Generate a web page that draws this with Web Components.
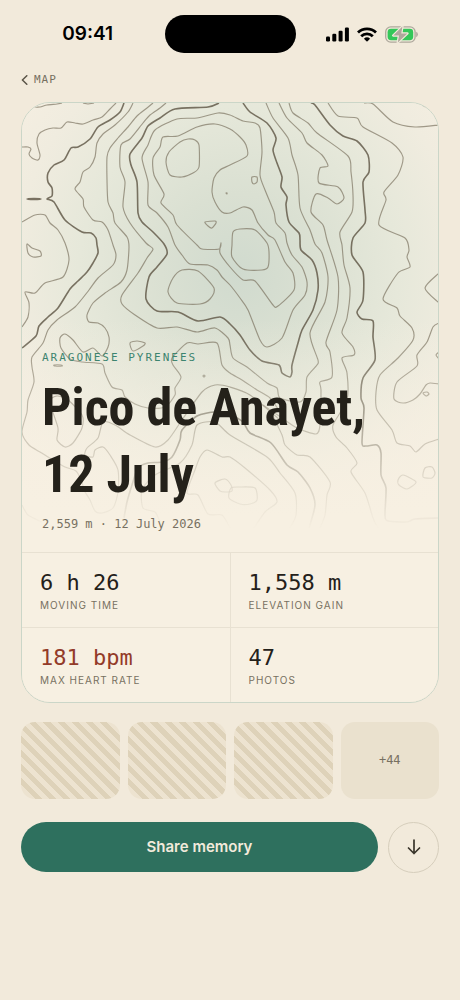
<!DOCTYPE html>
<html lang="en">
<head>
<meta charset="utf-8">
<meta name="viewport" content="width=device-width, initial-scale=1">
<title>Pico de Anayet</title>
<style>
  :root {
    --page: #f2eadb;
    --card: #f7f0e2;
    --ink: #24211a;
    --muted: #777061;
    --line: #e8e1d2;
    --edge: #cbd6c8;
    --accent: #2e705e;
    --alert: #933b29;
    --sand: #eae1ce;
    --gutter: 21px;
    --sans: Inter, "Liberation Sans", sans-serif;
    --mono: "DejaVu Sans Mono", "Liberation Mono", monospace;
    --display: "Roboto Condensed", Roboto, "Liberation Sans", sans-serif;
  }

  body {
    margin: 0;
    min-height: 100vh;
    background: var(--page);
    color: var(--ink);
    font-family: var(--sans);
  }
</style>
</head>
<body>
<memory-screen>
  <status-bar slot="status" time="09:41"></status-bar>
  <back-link slot="nav" href="#map">MAP</back-link>
  <memory-card>
    <memory-hero slot="hero">
      <span slot="region">ARAGONESE PYRENEES</span>
      <span slot="title">Pico de Anayet, 12 July</span>
      <span slot="meta">2,559 m · 12 July 2026</span>
    </memory-hero>
    <stat-cell value="6 h 26" label="MOVING TIME"></stat-cell>
    <stat-cell value="1,558 m" label="ELEVATION GAIN"></stat-cell>
    <stat-cell value="181 bpm" label="MAX HEART RATE" tone="alert"></stat-cell>
    <stat-cell value="47" label="PHOTOS"></stat-cell>
  </memory-card>
  <photo-strip more="+44"></photo-strip>
  <memory-actions>Share memory</memory-actions>
</memory-screen>

<script>
// Small base: clones the class template into an open shadow root.
class BaseElement extends HTMLElement {
  constructor() {
    super();
    const template = document.createElement("template");
    template.innerHTML = this.constructor.markup;
    this.attachShadow({ mode: "open" });
    this.shadowRoot.appendChild(template.content.cloneNode(true));
  }

  $(selector) {
    return this.shadowRoot.querySelector(selector);
  }
}

class MemoryScreen extends BaseElement {
  static markup = `
    <style>
      :host { display: block; }
      main {
        display: flex;
        flex-direction: column;
        padding: 0 var(--gutter) var(--gutter);
      }
      nav { display: flex; margin-bottom: 10px; }
    </style>
    <slot name="status"></slot>
    <main>
      <nav><slot name="nav"></slot></nav>
      <slot></slot>
    </main>
  `;
}

class StatusBar extends BaseElement {
  static markup = `
    <style>
      :host { display: block; color: #000; }
      header {
        display: grid;
        grid-template-columns: 1fr 131px 1fr;
        align-items: center;
        justify-items: center;
        height: 68px;
        padding: 0 11px;
      }
      time { font-size: 19px; font-weight: 600; line-height: 24px; }
      .island { width: 131px; height: 38px; border-radius: 19px; background: #000; }
      .icons { display: flex; align-items: center; gap: 8px; }
      svg { display: block; }
    </style>
    <header>
      <time></time>
      <div class="island"></div>
      <div class="icons">
        <svg width="23" height="15" viewBox="0 0 23 15" aria-hidden="true">
          <rect x="0" y="9.5" width="4" height="5" rx="1.2"/>
          <rect x="6.3" y="6.8" width="4" height="7.7" rx="1.2"/>
          <rect x="12.6" y="3.8" width="4" height="10.7" rx="1.2"/>
          <rect x="18.9" y="0.5" width="4" height="14" rx="1.2"/>
        </svg>
        <svg width="20" height="15" viewBox="0 0 20 15" aria-hidden="true">
          <g fill="none" stroke="#000" stroke-width="2.8">
            <path d="M1 5.4 A13 13 0 0 1 19 5.4"/>
            <path d="M4.2 9.2 A8.2 8.2 0 0 1 15.8 9.2"/>
          </g>
          <path d="M6.9 11.7 A4.6 4.6 0 0 1 13.1 11.7 L10.5 14.3 Q10 14.8 9.5 14.3 Z"/>
        </svg>
        <svg width="33" height="17" viewBox="0 0 33 17" aria-hidden="true">
          <rect x="0.7" y="0.9" width="29.4" height="15.2" rx="5" fill="none" stroke="#aea89c" stroke-width="1.3"/>
          <path d="M31.2 5.8 Q32.9 6.6 32.9 8.5 T31.2 11.2 Z" fill="#aea89c"/>
          <rect x="2.6" y="2.8" width="25.6" height="11.4" rx="3.4" fill="#34c759"/>
          <path d="M17.4 0.6 L8.2 9.5 H14 L12.8 16.4 L22.4 7.4 H16.3 Z" fill="#aea89c" stroke="#f2eadb" stroke-width="2.4" stroke-linejoin="round" paint-order="stroke"/>
        </svg>
      </div>
    </header>
  `;

  connectedCallback() {
    this.$("time").textContent = this.getAttribute("time") ?? "";
  }
}

class BackLink extends BaseElement {
  static markup = `
    <style>
      :host { display: block; }
      a {
        display: flex;
        align-items: center;
        gap: 6px;
        height: 24px;
        color: var(--muted);
        font: 11px/16px var(--mono);
        letter-spacing: 1px;
        text-decoration: none;
      }
    </style>
    <a>
      <svg width="7" height="10" viewBox="0 0 7 10" aria-hidden="true">
        <path d="M5.8 0.7 L1.4 5 L5.8 9.3" fill="none" stroke="#5b5548" stroke-width="1.5" stroke-linecap="round" stroke-linejoin="round"/>
      </svg>
      <slot></slot>
    </a>
  `;

  connectedCallback() {
    this.$("a").href = this.getAttribute("href") ?? "#";
  }
}

class MemoryCard extends BaseElement {
  static markup = `
    <style>
      :host { display: block; }
      article {
        overflow: hidden;
        border: 1px solid var(--edge);
        border-radius: 29px;
        background: var(--card);
      }
      .stats {
        display: grid;
        grid-template-columns: 1fr 1fr;
        gap: 1px;
        padding-top: 1px;
        background: var(--line);
      }
    </style>
    <article>
      <slot name="hero"></slot>
      <div class="stats"><slot></slot></div>
    </article>
  `;
}

// Elevation contours, "x,y x,y ..." in map units.
// Index lines are the heavier ones.
const CONTOURS = [
  { d: "33,107 40,107 47,105 57,104 62,103" },
  { d: "83,103 88,104 94,103" },
  { d: "116,103 110,109 102,117 93,120 83,124 75,123 67,122 61,128 53,128 45,130 39,134 37,143 40,155 38,160 32,158 29,154 31,149 28,147 22,147" },
  { d: "124,103 120,112 110,120 98,127 90,139 78,147 71,148 64,160 54,165 48,173 48,182 52,188 52,196 47,199 54,202 65,220 82,232 91,233 96,238 97,245 98,253 93,263 87,272 78,281 70,289 58,308 48,317 39,326 36,336 22,348", index: true },
  { d: "27,199 34,198.5 41,199 34,199.5", closed: true, index: true },
  { d: "133,103 128,112 115,125 103,134 97,143 95,157 90,167 83,172 80,182 75,189 83,199 84,207 93,220 102,222 108,230 113,245 116,255 113,265 98,278 89,290 75,307 57,320 48,330 43,343 32,357 32,367 34,382 28,400 27,412 22,432 29,445 40,452 48,457 65,467 76,471 82,482 84,490 90,500 95,511 102,513 113,508 118,492 118,470 110,455 103,447 95,450 93,457 85,455 87,448 98,438 103,422 115,425 130,435 155,447 168,440 182,420 202,392 215,385 230,387 250,395 280,420" },
  { d: "153,103 147,108 137,116 128,127 118,138 110,148 107,157 107,180 108,202 113,213 115,223 127,237 129,247 127,270 121,282 105,293 93,303 87,315 89,322 98,323 105,328 109,337 108,347 102,356 93,348 83,352 73,340 65,334 60,338 61,348 70,359 82,362 102,364 105,373 112,387 122,390 125,397 135,404 148,408 165,407 175,395 175,388 181,377 173,365 172,358 187,343 198,344 217,343 222,365 230,373 242,380 257,390 270,398 280,412" },
  { d: "166,103 160,108 150,115 143,123 130,139 121,145 120,167 125,182 123,207 130,223 146,243 153,249 147,258 138,273 122,295 122,304 135,315 157,328 177,327 197,332 215,328 228,338 230,345 233,358 247,367 267,383 277,388 280,398 300,402 306,392 307,377 317,365 318,360 310,333 325,302 328,277 322,253 315,244 310,230 300,208 298,175 292,155 288,138 273,118 266,103" },
  { d: "219,103 208,107 175,109 160,118 148,126 142,138 130,154 131,165 137,182 138,213 142,222 153,232 164,244 167,254 157,267 149,277 146,299 157,311 178,312 198,321 220,317 230,324 240,335 250,350 262,361 279,365 282,373 290,377 292,372 292,365 298,343 302,330 313,310 318,290 317,273 312,260 301,250 300,240 299,233 289,222 286,205 287,197 281,187 282,177 277,163 273,150 276,138 267,123 250,112 243,103", index: true },
  { d: "230,115 218,113 197,118 177,119 155,130 148,145 142,158 148,182 148,205 157,213 168,227 175,245 182,255 190,264 208,265 217,270 222,277 230,285 240,298 248,310 260,340 267,347 282,338 293,310 305,295 307,282 302,267 292,255 287,243 285,233 276,223 274,212 265,190 260,175 262,152 260,128 255,123 243,121", closed: true },
  { d: "230,129 215,124 197,127 178,136 163,137 160,147 153,158 154,175 164,194 161,203 173,215 177,225 197,245 202,249 219,249 221,243 220,253 230,267 243,280 255,281 273,305 278,306 294,290 293,273 285,262 275,240 268,235 258,223 252,210 243,207 230,213 222,212 215,202 212,192 214,178 220,170 230,165 247,156 246,145 240,137", closed: true },
  { d: "195,140 199,145 199,167 193,173 182,177 170,175 166,162 169,152 180,142 188,139", closed: true },
  { d: "205,222 215,221 216,223 212,228 208,226", closed: true },
  { d: "226,193 227,193 227,194", closed: true },
  { d: "252,177 257,177 257,182 254,184 252,182", closed: true },
  { d: "232,245 233,232 240,229 255,230 267,243 269,252 268,267 262,270 243,269 232,257", closed: true },
  { d: "182,270 198,271 214,288 210,299 200,304 177,303 168,292 173,278", closed: true },
  { d: "279,103 287,118 302,133 307,143 322,155 328,166 320,168 319,183 338,187 344,198 337,204 328,198 316,194 311,212 323,225 327,240 338,277 337,310 326,342 330,352 332,377 320,382 321,390 320,425 316,434 297,428 282,418 263,405" },
  { d: "289,103 293,113 308,123 317,133 348,156 351,172 353,195 352,212 340,232 342,245 344,265 350,288 347,318 342,333 353,347 354,355 342,358 347,373 347,400 333,425 336,437 347,448 357,463 351,472 365,493 373,518 378,528" },
  { d: "311,103 315,105 330,125 343,136 357,141 368,155 369,172 363,182 365,210 365,223 353,238 352,255 363,272 363,300 357,312 362,319 373,321 373,337 375,360 363,378 361,398 364,408 362,443 366,446 377,445 381,453 381,475 386,488 385,515 388,521 407,522 415,519 439,518", index: true },
  { d: "328,103 338,116 357,118 363,127 392,143 403,157 398,175 384,192 386,200 379,225 405,238 409,250 407,257 410,267 398,273 383,299 397,308 400,316 412,328 413,340 398,358 380,375 376,392 377,410 392,430 397,443 410,446 416,452 425,444 439,439" },
  { d: "364,103 373,104 393,122 415,127 439,125" },
  { d: "423,106 426,107 429,109" },
  { d: "439,273 425,288 439,303" },
  { d: "439,323 433,327 427,342 417,355 417,366 397,382 394,399 403,403 413,400 420,394 426,385 430,383 439,384" },
  { d: "439,352 436,355 439,359" },
  { d: "423,393 427,392 429,394 426,396", closed: true },
  { d: "398,480 403,475 416,482 407,489 399,485", closed: true },
  { d: "425,468 432,467 435,473 432,478 423,477", closed: true },
  { d: "124,518 127,502 132,485 138,468 148,463 162,462 172,457 180,440 182,430 197,416 215,412 230,415 243,422 250,433 271,443 287,465 298,472 310,488 315,505 309,528", index: true },
  { d: "160,522 155,512 143,508 142,490 155,475 180,463 192,445 197,425 215,422 230,435 267,457 280,473 295,493 296,515 290,528" },
  { d: "230,528 222,515 208,514 198,495 187,493 195,470 200,457 207,450 222,457 230,457 245,468 270,490 277,502 265,512 254,528" },
  { d: "215,483 225,479 231,485 232,491 226,492 220,491", closed: true },
  { d: "231,488 240,487 255,488 257,500 250,504 240,504 229,498", closed: true },
  { d: "270,410 282,435 285,445 297,455 310,457 330,482 327,495 325,515 320,528" },
  { d: "22,222 35,215 45,215 50,223 58,230 65,243 69,260 63,277 45,283 35,293 25,292 29,303 28,317 22,327" },
  { d: "27,244 32,248 40,251 41,256 33,257 28,253", closed: true },
  { d: "130,343 137,341 145,343 143,346 133,351", closed: true },
  { d: "54,365 61,365 62,366 55,366", closed: true },
  { d: "203,376 204,375 205,376 204,377", closed: true },
  { d: "50,402 57,396 68,400 82,415 82,428 73,443 65,447 57,440 58,428", closed: true },
  { d: "22,505 28,515 42,522" },
];

// Softly rounded curve through every point (Catmull-Rom to cubic).
function contourPath({ d, closed }) {
  const pts = d.split(" ").map((pair) => pair.split(",").map(Number));
  const n = pts.length;
  const at = (i) => (closed ? pts[(i + n) % n] : pts[Math.max(0, Math.min(n - 1, i))]);
  const soft = 8;
  let path = `M${pts[0]}`;
  for (let i = 0; i < (closed ? n : n - 1); i++) {
    const [p0, p1, p2, p3] = [at(i - 1), at(i), at(i + 1), at(i + 2)];
    const c1 = [p1[0] + (p2[0] - p0[0]) / soft, p1[1] + (p2[1] - p0[1]) / soft];
    const c2 = [p2[0] - (p3[0] - p1[0]) / soft, p2[1] - (p3[1] - p1[1]) / soft];
    path += `C${c1} ${c2} ${p2}`;
  }
  return closed ? path + "Z" : path;
}

class ContourMap extends BaseElement {
  static markup = `
    <style>
      :host {
        display: block;
        background:
          linear-gradient(to bottom, transparent 48%, #f7f0e2 92%),
          radial-gradient(ellipse 66% 64% at 52% 38%, #d0dace 0%, #dae0d2 28%, #e6e8da 58%, #f0ecdf 82%, #f7efe2 108%);
      }
      svg {
        display: block;
        width: 100%;
        height: 100%;
        -webkit-mask-image: linear-gradient(to bottom, #000 52%, transparent 95%);
        mask-image: linear-gradient(to bottom, #000 52%, transparent 95%);
      }
      path { fill: none; stroke: #7d7562; stroke-width: 1.15; stroke-opacity: 0.7; }
      path.index { stroke: #6b6453; stroke-width: 1.6; stroke-opacity: 0.9; }
    </style>
    <svg viewBox="22 103 416 449" preserveAspectRatio="xMidYMid slice" aria-hidden="true"></svg>
  `;

  connectedCallback() {
    this.$("svg").innerHTML = CONTOURS
      .map((line) => `<path class="${line.index ? "index" : ""}" d="${contourPath(line)}"/>`)
      .join("");
  }
}

class MemoryHero extends BaseElement {
  static markup = `
    <style>
      :host { display: block; }
      section { display: grid; min-height: 449px; }
      contour-map, .copy { grid-area: 1 / 1; min-width: 0; }
      contour-map { height: 100%; }
      .copy {
        z-index: 1;
        display: flex;
        flex-direction: column;
        justify-content: flex-end;
        padding: 20px;
      }
      p, h1 { margin: 0; }
      .region {
        color: #3d846f;
        font: 11px/16px var(--mono);
        letter-spacing: 2px;
      }
      h1 {
        margin: 8px 0;
        font: 700 52px/67px var(--display);
      }
      .meta { color: var(--muted); font: 12px/16px var(--mono); }
    </style>
    <section>
      <contour-map></contour-map>
      <div class="copy">
        <p class="region"><slot name="region"></slot></p>
        <h1><slot name="title"></slot></h1>
        <p class="meta"><slot name="meta"></slot></p>
      </div>
    </section>
  `;
}

class StatCell extends BaseElement {
  static markup = `
    <style>
      :host { display: block; background: var(--card); }
      dl {
        display: flex;
        flex-direction: column-reverse;
        margin: 0;
        padding: 15px 18px;
      }
      dt {
        color: var(--muted);
        font-size: 10px;
        line-height: 14px;
        letter-spacing: 1px;
      }
      dd {
        margin: 0;
        font: 22px/30px var(--mono);
      }
      :host([tone="alert"]) dd { color: var(--alert); }
    </style>
    <dl><dt></dt><dd></dd></dl>
  `;

  connectedCallback() {
    this.$("dt").textContent = this.getAttribute("label") ?? "";
    this.$("dd").textContent = this.getAttribute("value") ?? "";
  }
}

class PhotoStrip extends BaseElement {
  static markup = `
    <style>
      :host { display: block; margin-top: 19px; }
      .strip { display: grid; grid-template-columns: repeat(4, 1fr); gap: 8px; }
      .photo, .more {
        box-sizing: border-box;
        aspect-ratio: 32 / 25;
        border-radius: 14px;
      }
      .photo {
        background: repeating-linear-gradient(45deg, #ded2b9 0 5px, #ede3d0 5px 10px);
      }
      .more {
        display: grid;
        place-items: center;
        background: var(--sand);
        color: var(--muted);
        font: 12px/16px var(--mono);
      }
    </style>
    <div class="strip">
      <div class="photo"></div>
      <div class="photo"></div>
      <div class="photo"></div>
      <div class="more"></div>
    </div>
  `;

  connectedCallback() {
    this.$(".more").textContent = this.getAttribute("more") ?? "";
  }
}

class MemoryActions extends BaseElement {
  static markup = `
    <style>
      :host { display: block; margin-top: 23px; }
      .row { display: flex; align-items: center; gap: 10px; }
      button { margin: 0; padding: 0; cursor: pointer; }
      .share {
        flex: 1;
        height: 50px;
        border: 0;
        border-radius: 25px;
        background: var(--accent);
        color: #f2eadb;
        font: 600 15px/20px var(--sans);
      }
      .save {
        display: grid;
        place-items: center;
        width: 51px;
        height: 51px;
        border: 1px solid #d6cebc;
        border-radius: 50%;
        background: none;
      }
    </style>
    <div class="row">
      <button class="share" type="button"><slot></slot></button>
      <button class="save" type="button" aria-label="Save">
        <svg width="14" height="16" viewBox="0 0 14 16" aria-hidden="true">
          <path d="M7 1 V14.5 M1.5 9 L7 14.5 L12.5 9" fill="none" stroke="#3a352b" stroke-width="1.7" stroke-linecap="round" stroke-linejoin="round"/>
        </svg>
      </button>
    </div>
  `;
}

customElements.define("memory-screen", MemoryScreen);
customElements.define("status-bar", StatusBar);
customElements.define("back-link", BackLink);
customElements.define("memory-card", MemoryCard);
customElements.define("contour-map", ContourMap);
customElements.define("memory-hero", MemoryHero);
customElements.define("stat-cell", StatCell);
customElements.define("photo-strip", PhotoStrip);
customElements.define("memory-actions", MemoryActions);
</script>
</body>
</html>
